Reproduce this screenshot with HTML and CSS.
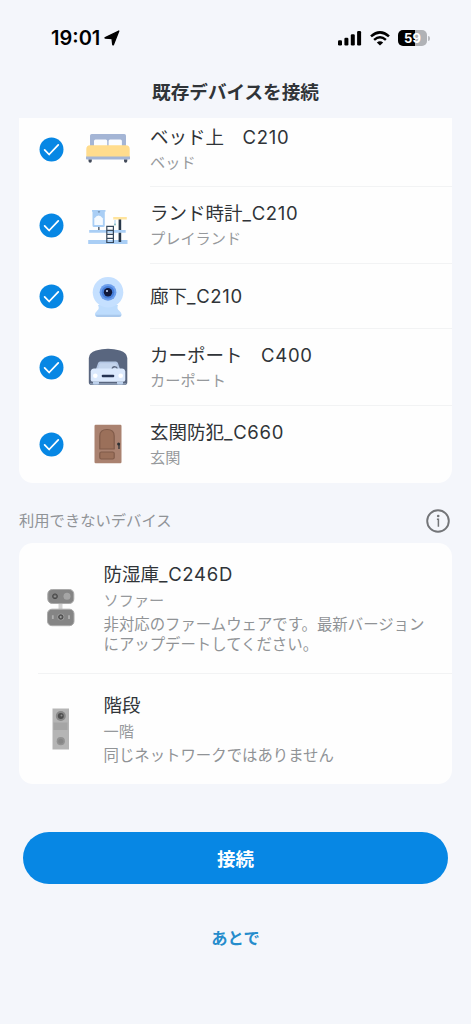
FILE: index.html
```html
<!DOCTYPE html>
<html lang="ja">
<head>
<meta charset="utf-8">
<meta name="viewport" content="width=device-width, initial-scale=1">
<title>既存デバイスを接続</title>
<link rel="stylesheet" href="styles.css">
</head>
<body>
<svg class="defs" width="0" height="0" aria-hidden="true">
  <symbol id="check" viewBox="0 0 24 24">
    <circle cx="12" cy="12" r="11.500" fill="#0787e4"/>
    <path d="M5.400 12.400l4.300 4.400 8.800-9.200" fill="none" stroke="#fff" stroke-width="1.700" stroke-linecap="round" stroke-linejoin="round"/>
  </symbol>
</svg>
<div class="screen">
  <header class="status">
    <div class="clock"><span>19:01</span>
      <svg width="16" height="16" viewBox="0 0 16 16"><path d="M14.800 1 9.500 14.500q-.6.800-.8-.2L8 8.500l-6.500-.3q-1-.2-.2-.7z" fill="#000" stroke="#000" stroke-width="1.300" stroke-linejoin="round"/></svg>
    </div>
    <div class="signals">
      <svg width="24" height="16" viewBox="0 0 24 16"><rect x="0" y="10.200" width="4" height="5.300" rx="1.200"/><rect x="6.400" y="7.700" width="4" height="7.800" rx="1.200"/><rect x="12.800" y="4.200" width="4" height="11.300" rx="1.200"/><rect x="19.100" y="1" width="4" height="14.500" rx="1.200"/></svg>
      <svg width="20" height="15" viewBox="0 0 20 15"><g fill="none" stroke="#000" stroke-width="2.500"><path d="M1 5.400q9-8.100 18 0"/><path d="M4.100 8.900q5.900-5.200 11.800 0"/></g><path d="M6.800 11.400q3.200-2.400 6.400 0L10 14.600z"/></svg>
      <div class="battery"><div class="cell">59</div><i class="tip"></i></div>
    </div>
  </header>
  <h1 class="title">既存デバイスを接続</h1>

  <section class="card available">
    <ul class="list">
      <li class="row">
        <svg class="check"><use href="#check"/></svg>
        <svg class="icon" viewBox="0 0 46 46"><path d="M5 21V9.700Q5 8 6.700 8h32.600q1.700 0 1.700 1.700V21z" fill="#a4b5d5"/><path d="M9 20v-5q0-1.500 1.500-1.500h10.300q1.400 0 1.400 1.500v5zM23.600 20v-5q0-1.500 1.500-1.500h10.300q1.500 0 1.500 1.500v5z" fill="#fafcff"/><path d="M1.300 31v-8q0-3.800 3.800-3.800h35.800q3.800 0 3.800 3.800v8z" fill="#ffdc8d"/><path d="M1 30.500h44v2.300q0 .8-.8.800H1.800q-.8 0-.8-.8z" fill="#a4b5d5"/><path d="M3.500 33.600h3.300v1.500a1.600 1.600 0 0 1-3.300 0zM39 33.600h3.300v1.500a1.600 1.600 0 0 1-3.300 0z" fill="#434b5a"/></svg>
        <div class="info"><p class="name">ベッド上　<span>C210</span></p><p class="place">ベッド</p></div>
      </li>
      <li class="row">
        <svg class="check"><use href="#check"/></svg>
        <svg class="icon" viewBox="0 0 46 46"><path d="M7 7h13.500v1.800h-.7v13.700q0 1.500-1.500 1.500H9q-1.500 0-1.500-1.500V8.800H7z" fill="#a9cef5"/><path d="M9.300 22v-6.500q4.300-6 8.600 0V22z" fill="#f5faff"/><path d="M12.600 8.500h2.700l-1.300 1.300z" fill="#52677e"/><path d="M13.200 24h1.300v3.500h-1.300z" fill="#394554"/><path d="M4.200 27h36.500v2.800H4.200zM3.200 37h39.300v4H3.200z" fill="#a9cef5"/><path d="M33.600 15h2.600v12h-2.600zM33.600 29.800h2.600V39h-2.600z" fill="#28384a"/><path d="M28.200 14h13.600v2.600H28.200z" fill="#ffe49c"/><path d="M30 17v4.500" stroke="#a9cef5"/><circle cx="30" cy="21.500" r="1" fill="#83bdc2"/><path d="M21.800 23.300h6.600v16.200h-6.600zm0 4h6.600m-6.600 4h6.600m-6.600 4h6.600" fill="none" stroke="#35475b" stroke-width="1.200"/></svg>
        <div class="info"><p class="name">ランド時計<span>_C210</span></p><p class="place">プレイランド</p></div>
      </li>
      <li class="row short">
        <svg class="check"><use href="#check"/></svg>
        <svg class="icon" viewBox="0 0 46 46"><path d="M13 31h20q-1.500 3.500 1 5.500 2.500 2 2.500 3.800 0 2.700-2.700 2.700H12.700Q10 43 10 40.300q0-1.500 2.300-3.800 2.500-2 .7-5.500z" fill="#bddcfd"/><path d="M10.500 40.800h26q-.2 2.200-2.700 2.200H13.200q-2.500 0-2.700-2.200z" fill="#a9c8ec"/><circle cx="23" cy="18.300" r="15.300" fill="#c5e0ff"/><circle cx="23" cy="18.300" r="8.400" fill="#6c9eec"/><circle cx="23" cy="18.300" r="6.300" fill="#477fda"/><circle cx="23" cy="18.300" r="4.200" fill="#10183a"/><circle cx="22" cy="17" r="1" fill="#c8dcff"/></svg>
        <div class="info"><p class="name">廊下<span>_C210</span></p></div>
      </li>
      <li class="row">
        <svg class="check"><use href="#check"/></svg>
        <svg class="icon" viewBox="0 0 46 46"><path d="M3.800 38.300V14Q4 8.500 11 6.500q12-3.500 24 0 7 2 7.300 7.500v24.300q0 2.700-2.700 2.700H6.500q-2.700 0-2.700-2.700z" fill="#59667f"/><path d="M4.500 39h37.200q-.4 2-2.400 2H7q-2 0-2.500-2z" fill="#8594ab"/><path d="m10 28 3-8.800q.5-1.700 2.200-1.700h15.600q1.700 0 2.200 1.700L36 28z" fill="#b4c7e4"/><path d="m12.500 26 2-6q.3-.8 1.200-.8h14.600q.9 0 1.200.8l2 6z" fill="#c3d4ec"/><path d="M27 25.500q.5-3 3-2.700t2 2.700" fill="none" stroke="#59667f" stroke-width="1.300"/><path d="M9 24.500h28q2.800 0 3.300 3v7.800q0 2.500-2.500 2.500H8.200q-2.500 0-2.500-2.500v-7.800q.5-3 3.300-3z" fill="#dbe9fd"/><path d="M8 37.800h6v1.600q0 1-1 1H9q-1 0-1-1zm24 0h6v1.600q0 1-1 1h-4q-1 0-1-1z" fill="#bdd1ec"/><circle cx="10.300" cy="31.800" r="2.300" fill="#fff"/><circle cx="35.700" cy="31.800" r="2.300" fill="#fff"/><rect x="16.800" y="30.700" width="12.400" height="2.500" rx=".8" fill="#253352"/></svg>
        <div class="info"><p class="name">カーポート　<span>C400</span></p><p class="place">カーポート</p></div>
      </li>
      <li class="row">
        <svg class="check"><use href="#check"/></svg>
        <svg class="icon" viewBox="0 0 46 46"><rect x="9.500" y="3.700" width="27" height="38.500" rx="1.200" fill="#aa8270"/><path d="M14.800 28V15q0-6.500 7.200-6.500T29.200 15v13z" fill="#9b705a" stroke="#805b49" stroke-width="1.200" stroke-linejoin="round"/><rect x="14.800" y="31" width="14.400" height="7" rx="1.500" fill="#9b705a" stroke="#805b49" stroke-width="1.200"/><circle cx="33.600" cy="23" r="1.500" fill="#2e3134"/><path d="M34 23v5" stroke="#2e3134" stroke-width="1.300"/></svg>
        <div class="info"><p class="name">玄関防犯<span>_C660</span></p><p class="place">玄関</p></div>
      </li>
    </ul>
  </section>

  <div class="section-head">
    <h2 class="label">利用できないデバイス</h2>
    <svg width="24" height="24" viewBox="0 0 24 24"><circle cx="12" cy="12" r="10.800" fill="none" stroke="#737578" stroke-width="1.900"/><circle cx="12.200" cy="7" r="1.300" fill="#737578"/><path d="M10.900 10.300h1.500v7.400" fill="none" stroke="#737578" stroke-width="1.500"/></svg>
  </div>

  <section class="card">
    <ul class="list">
      <li class="entry">
        <svg class="device" viewBox="0 0 30 42"><path d="M12.500 16h4v6h-4z" fill="#d2d2d2"/><rect x="1.800" y="2.500" width="26" height="14" rx="4.500" fill="#858585" stroke="#aaa"/><circle cx="9" cy="9.300" r="2.400" fill="#666" stroke="#484848"/><circle cx="9" cy="9.300" r=".8" fill="#aaa"/><circle cx="21" cy="9.300" r="3.500" fill="#a5a5a5"/><rect x="1.500" y="22.200" width="26.500" height="16.500" rx="4.500" fill="#858585" stroke="#aaa"/><circle cx="14.800" cy="30" r="3.600" fill="#999"/><circle cx="14.800" cy="30" r="2.200" fill="#666" stroke="#484848"/><circle cx="14.800" cy="30" r=".7" fill="#ccc"/><path d="M6.800 28.300v3.800m16.200-3.800v3.800" stroke="#b0b0b0" stroke-width="1.800"/></svg>
        <div class="info"><p class="name">防湿庫<span>_C246D</span></p><p class="place">ソファー</p><p class="reason">非対応のファームウェアです。最新バージョンにアップデートしてください。</p></div>
      </li>
      <li class="entry">
        <svg class="device" viewBox="0 0 30 42"><path d="M6.500.5H23v41H6.500z" fill="#b5b5b5"/><path d="M7.500 14.500h14v7.500h-14z" fill="#a5a5a5"/><circle cx="14.800" cy="8" r="5" fill="#898989"/><circle cx="14.800" cy="8" r="3" fill="#4f4f4f"/><circle cx="15.500" cy="7.500" r="1" fill="#8f8f8f"/><circle cx="14.800" cy="33.200" r="4.100" fill="#929292"/><circle cx="14.800" cy="33.200" r="2.500" fill="#868686"/></svg>
        <div class="info"><p class="name">階段</p><p class="place">一階</p><p class="reason">同じネットワークではありません</p></div>
      </li>
    </ul>
  </section>

  <footer class="actions">
    <button class="connect">接続</button>
    <button class="later">あとで</button>
  </footer>
</div>
</body>
</html>
```
FILE: styles.css
```css
* { box-sizing: border-box; margin: 0; padding: 0; }
body { background: #f4f6fb; font-family: Inter, "Noto Sans CJK JP", sans-serif; color: #303438; }
svg { display: block; flex: none; }
.defs { position: absolute; }
.screen { display: flex; flex-direction: column; height: 1024px; padding: 0 19px; overflow: hidden; }
.status { display: flex; justify-content: space-between; align-items: center; height: 76px; padding: 0 22px 0 32px; color: #000; }
.clock { display: flex; align-items: center; gap: 4px; font-size: 20px; font-weight: 600; }
.signals { display: flex; align-items: center; gap: 8px; }
.battery { display: flex; align-items: center; gap: 1px; }
.cell { width: 29px; height: 16px; border-radius: 5px; background: linear-gradient(90deg, #000 59%, #b0b2b6 59%); color: #fff; font-size: 13px; line-height: 16px; font-weight: 700; text-align: center; }
.tip { width: 2px; height: 5px; border-radius: 0 2px 2px 0; background: #b8babf; }
.title { height: 42px; line-height: 33px; font-size: 18.600px; font-weight: 600; text-align: center; }
.card { background: #fefefe; border-radius: 14px; width: 433px; overflow: hidden; }
.list { list-style: none; }
.available { height: 364.500px; border-radius: 0 0 14px 14px; display: flex; flex-direction: column; justify-content: flex-end; }
.row { display: flex; align-items: center; height: 76.700px; padding-left: 20px; }
.short { height: 65px; }
.check { width: 25px; height: 25px; margin-right: 21px; }
.icon { width: 46px; height: 46px; margin-right: 19px; }
.row .info { flex: 1; align-self: stretch; display: flex; flex-direction: column; justify-content: center; gap: 2px; border-bottom: 1px solid #f2f3f4; }
.row:last-child .info { border-bottom: 0; }
.name { font-size: 18.500px; line-height: 26px; }
.name span { letter-spacing: .7px; }
.place { font-size: 15.200px; line-height: 22px; color: #96999c; }
.reason { font-size: 15.400px; line-height: 20px; color: #909396; }
.section-head { display: flex; justify-content: space-between; align-items: center; height: 60px; padding: 16px 2px 0 0; }
.label { font-size: 15.300px; line-height: 24px; font-weight: 400; color: #909397; }
.entry { display: flex; align-items: center; margin-left: 19px; padding: 18px 0; border-bottom: 1px solid #f2f3f4; }
.entry:last-child { border-bottom: 0; }
.device { width: 30px; height: 42px; margin: 0 27.500px 0 8px; }
.entry .info { display: flex; flex-direction: column; gap: 3px; width: 330px; }
.actions { display: flex; flex-direction: column; align-items: center; gap: 35px; padding-top: 48px; }
button { border: 0; font-family: inherit; font-weight: 600; background: none; }
.connect { width: 425px; height: 52px; border-radius: 26px; background: #0787e4; color: #fff; font-size: 18.500px; }
.later { font-size: 16.300px; line-height: 38px; color: #258ccc; }
```
